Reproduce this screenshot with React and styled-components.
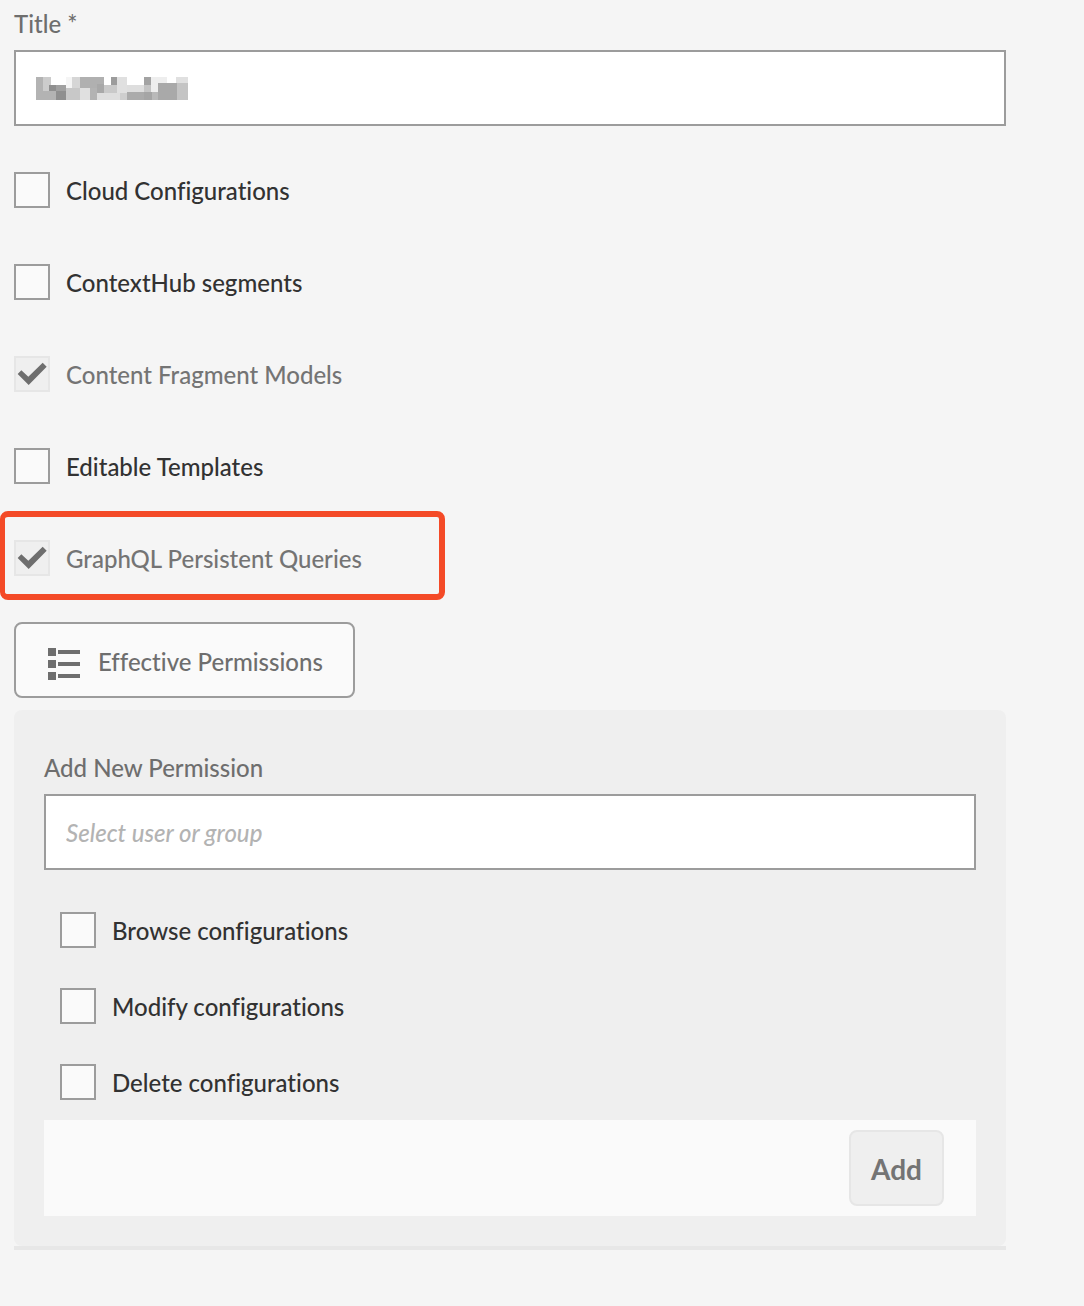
import React, { useState } from 'react';
import styled, { createGlobalStyle } from 'styled-components';

const GlobalStyle = createGlobalStyle`
  * {
    box-sizing: border-box;
  }

  body {
    margin: 0;
    background: #f5f5f5;
    color: #323232;
    font-family: Lato, "Noto Sans", sans-serif;
    font-size: 24px;
    font-weight: 500;
    font-variant-ligatures: none;
    line-height: 32px;
  }

  input, button {
    font: inherit;
    font-variant-ligatures: none;
  }
`;

const FEATURES = [
  { id: 'cloud', label: 'Cloud Configurations' },
  { id: 'segments', label: 'ContextHub segments' },
  { id: 'models', label: 'Content Fragment Models', locked: true },
  { id: 'templates', label: 'Editable Templates' },
  { id: 'graphql', label: 'GraphQL Persistent Queries', locked: true, marked: true },
];

const PERMISSIONS = [
  { id: 'browse', label: 'Browse configurations' },
  { id: 'modify', label: 'Modify configurations' },
  { id: 'delete', label: 'Delete configurations' },
];

// x, y, width, height, fill
const MOSAIC = [
  [0, 0, 21, 69, '#b3b3b3'],
  [21, 0, 24, 42, '#cccccc'],
  [21, 42, 39, 27, '#b3b3b3'],
  [39, 24, 21, 18, '#8f8f8f'],
  [60, 24, 30, 18, '#a0a0a0'],
  [60, 42, 30, 27, '#8f8f8f'],
  [90, 0, 18, 33, '#f5f5f5'],
  [108, 0, 24, 33, '#d6d6d6'],
  [90, 33, 42, 36, '#c8c8c8'],
  [132, 0, 72, 33, '#b0b0b0'],
  [132, 33, 30, 36, '#e0e0e0'],
  [162, 33, 21, 36, '#b3b3b3'],
  [183, 21, 21, 27, '#a8a8a8'],
  [183, 48, 69, 21, '#dedede'],
  [225, 0, 18, 24, '#9c9c9c'],
  [204, 24, 39, 24, '#c9c9c9'],
  [243, 0, 30, 48, '#e0e0e0'],
  [252, 48, 21, 21, '#cecece'],
  [273, 24, 51, 21, '#dedede'],
  [273, 45, 51, 24, '#ababab'],
  [324, 0, 21, 24, '#a3a3a3'],
  [324, 24, 21, 21, '#c4c4c4'],
  [324, 45, 24, 24, '#a5a5a5'],
  [345, 0, 48, 18, '#eeeeee'],
  [345, 18, 21, 27, '#eeeeee'],
  [348, 45, 18, 24, '#b9b9b9'],
  [366, 18, 57, 51, '#a9a9a9'],
  [420, 0, 36, 18, '#e0e0e0'],
  [423, 18, 33, 51, '#c4c4c4'],
];

const CheckRow = ({ item }) => {
  const [checked, setChecked] = useState(Boolean(item.locked));

  return (
    <>
      <Box>
        <BoxInput
          id={item.id}
          type="checkbox"
          checked={checked}
          disabled={item.locked}
          onChange={(e) => setChecked(e.target.checked)}
        />
        {checked && (
          <Tick viewBox="0 0 108 108" aria-hidden="true">
            <path d="M11 54 L22 43 L43 62 L86 20 L98 32 L44 87 Z" />
          </Tick>
        )}
      </Box>
      <CheckLabel htmlFor={item.id} $muted={item.locked}>{item.label}</CheckLabel>
    </>
  );
};

const App = () => {
  const [title, setTitle] = useState('');
  const [user, setUser] = useState('');

  return (
    <>
      <GlobalStyle />
      <Form onSubmit={(e) => e.preventDefault()}>
        <FieldLabel htmlFor="title">Title *</FieldLabel>
        <Field>
          <TextInput id="title" value={title} onChange={(e) => setTitle(e.target.value)} />
          {!title && (
            <Mosaic viewBox="0 0 456 69" shapeRendering="crispEdges" aria-hidden="true">
              {MOSAIC.map(([x, y, w, h, fill]) => (
                <rect key={`${x}-${y}`} x={x} y={y} width={w} height={h} fill={fill} />
              ))}
            </Mosaic>
          )}
        </Field>

        <Features>
          {FEATURES.map((item) => (
            <FeatureRow key={item.id}>
              <CheckRow item={item} />
              {item.marked && <Highlight />}
            </FeatureRow>
          ))}
        </Features>

        <EffectiveButton type="button">
          <svg width="32" height="32" viewBox="0 0 32 32" fill="#6e6e6e" aria-hidden="true">
            <path d="M0 0h8v8H0zM10 2h22v4H10zM0 12h8v8H0zM10 14h22v4H10zM0 24h8v8H0zM10 26h22v4H10z" />
          </svg>
          <ButtonText>Effective Permissions</ButtonText>
        </EffectiveButton>

        <PanelWrap>
          <Panel>
            <FieldLabel htmlFor="user">Add New Permission</FieldLabel>
            <TextInput
              id="user"
              placeholder="Select user or group"
              value={user}
              onChange={(e) => setUser(e.target.value)}
            />
            <Permissions>
              {PERMISSIONS.map((item) => (
                <PermissionRow key={item.id}>
                  <CheckRow item={item} />
                </PermissionRow>
              ))}
            </Permissions>
            <Footer>
              <AddButton type="submit" disabled>Add</AddButton>
            </Footer>
          </Panel>
        </PanelWrap>
      </Form>
    </>
  );
};

const Form = styled.form`
  display: flex;
  flex-direction: column;
  align-items: stretch;
  padding: 8px 78px 56px 14px;
`;

const FieldLabel = styled.label`
  display: block;
  margin-bottom: 10px;
  color: #6e6e6e;
`;

const Field = styled.div`
  position: relative;
`;

const TextInput = styled.input`
  display: block;
  width: 100%;
  height: 76px;
  padding: 0 20px;
  border: 2px solid #9c9c9c;
  border-radius: 0;
  background: #fff;
  color: #323232;
  outline: none;

  &::placeholder {
    color: #b3b3b3;
    font-style: italic;
    opacity: 1;
  }
`;

const Mosaic = styled.svg`
  position: absolute;
  top: 27px;
  left: 22px;
  width: 152px;
  height: 23px;
  pointer-events: none;
`;

const Features = styled.div`
  padding: 18px 0;
`;

const FeatureRow = styled.div`
  position: relative;
  display: flex;
  align-items: center;
  gap: 16px;
  height: 92px;
`;

const Highlight = styled.div`
  position: absolute;
  top: -1px;
  left: -14px;
  width: 445px;
  height: 89px;
  border: 6px solid #f44a27;
  border-left-width: 5px;
  border-radius: 8px;
  pointer-events: none;
`;

const Box = styled.span`
  display: grid;
  flex: none;
  width: 36px;
  height: 36px;

  > * {
    grid-area: 1 / 1;
  }
`;

const BoxInput = styled.input`
  appearance: none;
  width: 36px;
  height: 36px;
  margin: 0;
  border: 2px solid #9c9c9c;
  background: #fafafa;

  &:disabled {
    border-color: #e6e6e6;
    background: #efefef;
  }
`;

const Tick = styled.svg`
  width: 36px;
  height: 36px;
  fill: #6e6e6e;
  pointer-events: none;
`;

const CheckLabel = styled.label`
  padding-top: 2px;
  color: ${({ $muted }) => ($muted ? '#747474' : '#323232')};
`;

const EffectiveButton = styled.button`
  display: flex;
  align-items: center;
  align-self: flex-start;
  gap: 18px;
  height: 76px;
  padding: 8px 30px 0 32px;
  border: 2px solid #9c9c9c;
  border-radius: 8px;
  background: #fafafa;
  color: #6e6e6e;
`;

const ButtonText = styled.span`
  padding-bottom: 4px;
`;

const PanelWrap = styled.div`
  margin-top: 12px;
  border-bottom: 4px solid #e7e7e7;
`;

const Panel = styled.section`
  padding: 42px 30px 30px;
  border-radius: 8px;
  background: #efefef;
`;

const Permissions = styled.div`
  padding: 22px 16px 0;
`;

const PermissionRow = styled.div`
  display: flex;
  align-items: center;
  gap: 16px;
  height: 76px;
`;

const Footer = styled.div`
  display: flex;
  justify-content: flex-end;
  padding: 10px 32px;
  background: #fafafa;
`;

const AddButton = styled.button`
  height: 76px;
  padding: 2px 20px 0;
  border: 2px solid #e6e6e6;
  border-radius: 8px;
  background: #efefef;
  color: #747474;
  font-size: 28px;
  font-weight: 700;
`;

export default App;
